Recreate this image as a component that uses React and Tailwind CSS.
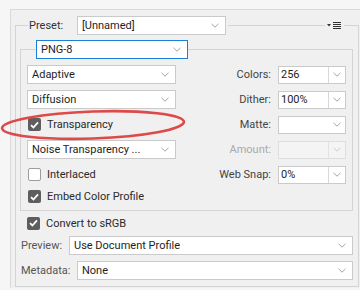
import React from "react";

const Chevron = ({ color = "#9a9a9a" }) => (
  <svg width="8" height="5" viewBox="0 0 8 5" className="block">
    <path d="M0.5 0.8 L4 4.2 L7.5 0.8" fill="none" stroke={color} strokeWidth="0.9" />
  </svg>
);

const Dropdown = ({ text, className = "", focused = false }) => (
  <div
    className={`h-[19px] bg-white border ${focused ? "border-[#1a7fd8]" : "border-[#cacaca]"} flex items-center justify-between pl-[4px] pr-[6px] text-[#1e1e1e] ${className}`}
  >
    <span className="leading-none whitespace-nowrap">{text}</span>
    <Chevron />
  </div>
);

const Combo = ({ text, disabled = false, split = true }) => (
  <div
    className={`w-[68px] h-[18px] border flex items-stretch ${disabled ? "bg-[#f4f4f4] border-[#dedede]" : "bg-white border-[#cacaca]"}`}
  >
    <div className="flex-1 flex items-center pl-[2px] text-[#1e1e1e] leading-none">{text}</div>
    <div className={`w-[17px] flex items-center justify-center ${split ? (disabled ? "border-l border-[#e2e2e2]" : "border-l border-[#d8d8d8]") : ""}`}>
      <Chevron color={disabled ? "#c8c8c8" : "#9a9a9a"} />
    </div>
  </div>
);

const Check = ({ checked }) =>
  checked ? (
    <div className="w-[13px] h-[13px] rounded-[2px] bg-[#5e5e5e] flex items-center justify-center shrink-0">
      <svg width="9" height="8" viewBox="0 0 9 8">
        <path d="M1 4.2 L3.4 6.5 L8 1.4" fill="none" stroke="#ffffff" strokeWidth="1.8" />
      </svg>
    </div>
  ) : (
    <div className="w-[13px] h-[13px] rounded-[2px] bg-white border border-[#9c9c9c] shrink-0" />
  );

const CheckRow = ({ checked, label }) => (
  <div className="flex items-center gap-[6px] ml-[1px]">
    <Check checked={checked} />
    <span className="leading-none text-[#2a2a2a] whitespace-nowrap">{label}</span>
  </div>
);

const RightField = ({ label, children, disabled }) => (
  <div className="flex items-center gap-[7px]">
    <span className={`leading-none whitespace-nowrap ${disabled ? "text-[#a9a9a9]" : "text-[#444444]"}`}>{label}</span>
    {children}
  </div>
);

export default function App() {
  return (
    <div
      className="w-[360px] h-[290px] bg-[#f6f6f6] relative overflow-hidden text-[11px]"
      style={{ fontFamily: "Roboto, 'Noto Sans', sans-serif" }}
    >
      <div className="ml-[10px] mt-[9px] h-[279px] border-t border-l border-[#d9d9d9] bg-[#f0f0f0] pl-[4px] pt-[15px]">
        {/* Preset group */}
        <div className="w-[344px] h-[262px] border border-[#d4d4d4]">
          <div className="-mt-[10px] h-[19px] flex items-center">
            <div className="ml-[12px] bg-[#f0f0f0] h-full flex items-center pl-[1px] pr-[2px]">
              <span className="w-[48px] leading-none text-[#333333]">Preset:</span>
              <Dropdown text="[Unnamed]" className="w-[149px]" />
            </div>
            <div className="flex-1" />
            <div className="w-[19px] h-full bg-[#f0f0f0] flex items-center justify-center mr-[14px]">
              <svg width="15" height="8" viewBox="0 0 15 8" className="block">
                <path d="M0 2 L4 2 L2 4.5 Z" fill="#333333" />
                <rect x="6" y="0" width="8" height="1" fill="#333333" />
                <rect x="6" y="2" width="8" height="1" fill="#333333" />
                <rect x="6" y="4" width="8" height="1" fill="#333333" />
                <rect x="6" y="6" width="8" height="1" fill="#333333" />
              </svg>
            </div>
          </div>

          {/* Inner PNG-8 frame */}
          <div className="mt-[14px] ml-[4px] w-[333px] border border-[#d4d4d4] pb-[4px]">
            <div className="-mt-[10px] h-[19px] flex items-center">
              <Dropdown text="PNG-8" focused className="ml-[15px] w-[152px]" />
            </div>
            <div className="mt-[3px] pl-[6px] pr-[6px]">
              <div className="h-[25px] flex items-center justify-between">
                <Dropdown text="Adaptive" className="w-[149px]" />
                <RightField label="Colors:">
                  <Combo text="256" />
                </RightField>
              </div>
              <div className="h-[25px] flex items-center justify-between">
                <Dropdown text="Diffusion" className="w-[149px]" />
                <RightField label="Dither:">
                  <Combo text="100%" />
                </RightField>
              </div>
              <div className="h-[25px] flex items-center justify-between">
                <CheckRow checked label="Transparency" />
                <RightField label="Matte:">
                  <Combo text="" split={false} />
                </RightField>
              </div>
              <div className="h-[25px] flex items-center justify-between">
                <Dropdown text="Noise Transparency ..." className="w-[149px]" />
                <RightField label="Amount:" disabled>
                  <Combo text="" disabled />
                </RightField>
              </div>
              <div className="h-[25px] flex items-center justify-between">
                <CheckRow checked={false} label="Interlaced" />
                <RightField label="Web Snap:">
                  <Combo text="0%" />
                </RightField>
              </div>
              <div className="h-[19px] flex items-center">
                <CheckRow checked label="Embed Color Profile" />
              </div>
            </div>
          </div>

          <div className="mt-[2px] h-[20px] flex items-center pl-[10px]">
            <CheckRow checked label="Convert to sRGB" />
          </div>
          <div className="mt-[3px] h-[19px] flex items-center pl-[5px] pr-[5px]">
            <span className="w-[48px] leading-none text-[#555555]">Preview:</span>
            <Dropdown text="Use Document Profile" className="flex-1" />
          </div>
          <div className="mt-[6px] h-[19px] flex items-center pl-[5px] pr-[5px]">
            <span className="w-[56px] leading-none text-[#555555]">Metadata:</span>
            <Dropdown text="None" className="flex-1" />
          </div>
        </div>
      </div>

      {/* Red annotation ellipse */}
      <svg className="absolute left-0 top-0 pointer-events-none" width="360" height="290" viewBox="0 0 360 290">
        <ellipse
          cx="93"
          cy="125"
          rx="91"
          ry="13.5"
          transform="rotate(-2 93 125)"
          fill="none"
          stroke="#de4a4a"
          strokeWidth="2.6"
        />
      </svg>
    </div>
  );
}
